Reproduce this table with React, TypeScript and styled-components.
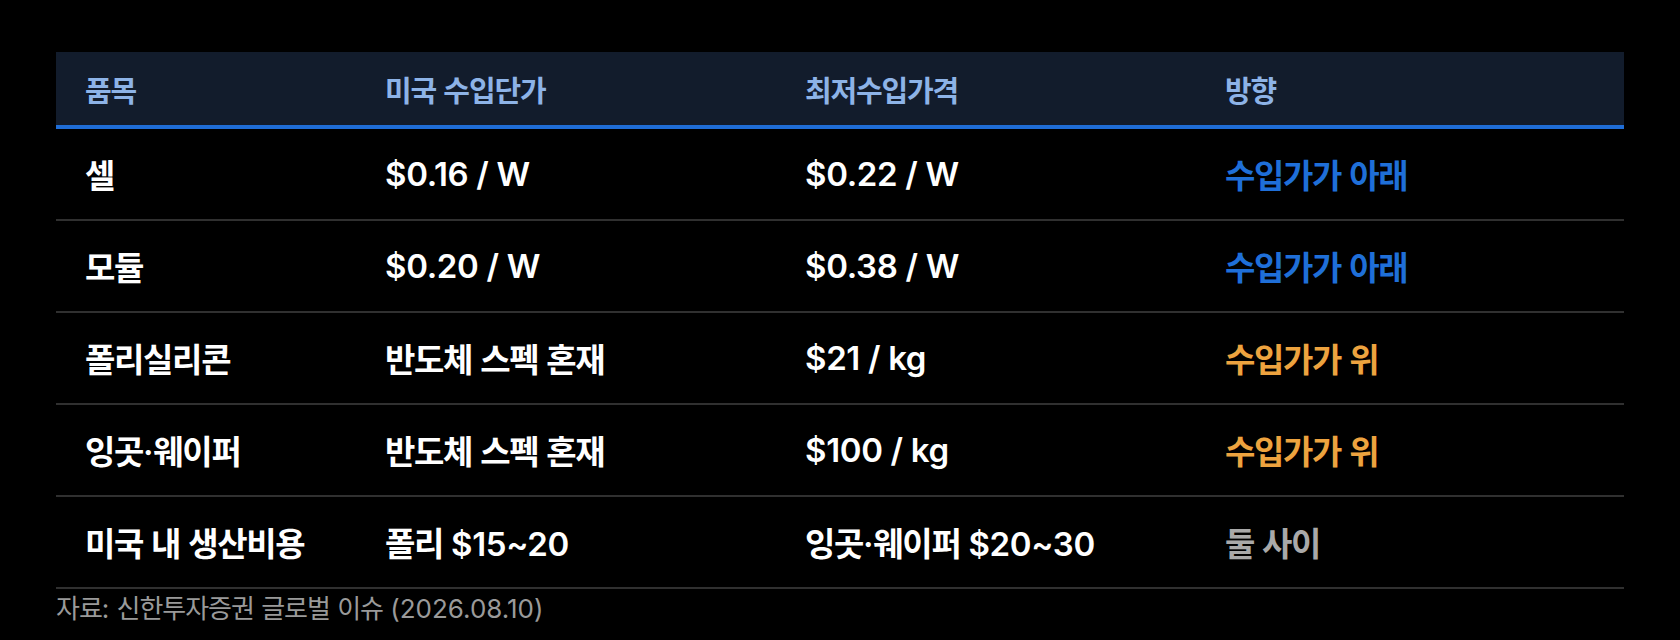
import React from "react";
import styled, { createGlobalStyle } from "styled-components";

type Tone = "plain" | "below" | "above" | "between";

interface RowData {
    item: string;
    usPrice: string;
    minPrice: string;
    direction: string;
    tone: Tone;
}

const ROWS: RowData[] = [
    { item: "셀", usPrice: "$0.16 / W", minPrice: "$0.22 / W", direction: "수입가가 아래", tone: "below" },
    { item: "모듈", usPrice: "$0.20 / W", minPrice: "$0.38 / W", direction: "수입가가 아래", tone: "below" },
    { item: "폴리실리콘", usPrice: "반도체 스펙 혼재", minPrice: "$21 / kg", direction: "수입가가 위", tone: "above" },
    { item: "잉곳·웨이퍼", usPrice: "반도체 스펙 혼재", minPrice: "$100 / kg", direction: "수입가가 위", tone: "above" },
    { item: "미국 내 생산비용", usPrice: "폴리 $15~20", minPrice: "잉곳·웨이퍼 $20~30", direction: "둘 사이", tone: "between" },
];

const TONES: Record<Tone, string> = {
    plain: "#ffffff",
    below: "#1f6fd8",
    above: "#eda33f",
    between: "#a9a9a9",
};

// hangul runs get tighter tracking so they sit closer to the latin glyphs
const HANGUL = /([\u3131-\u318e\uac00-\ud7a3]+)/;

const withHangul = (text: string) =>
    text.split(HANGUL).map((part, i) =>
        HANGUL.test(part) ? <Hangul key={i}>{part}</Hangul> : part
    );

const App: React.FC = () => {
    return (
        <>
            <GlobalStyle />
            <Page>
                <HeadRow>
                    <HeadCell>{withHangul("품목")}</HeadCell>
                    <HeadCell>{withHangul("미국 수입단가")}</HeadCell>
                    <HeadCell>{withHangul("최저수입가격")}</HeadCell>
                    <HeadCell>{withHangul("방향")}</HeadCell>
                </HeadRow>
                {ROWS.map((row) => (
                    <BodyRow key={row.item}>
                        <Cell tone="plain">{withHangul(row.item)}</Cell>
                        <Cell tone="plain">{withHangul(row.usPrice)}</Cell>
                        <Cell tone="plain">{withHangul(row.minPrice)}</Cell>
                        <Cell tone={row.tone}>{withHangul(row.direction)}</Cell>
                    </BodyRow>
                ))}
                <Source>{withHangul("자료: 신한투자증권 글로벌 이슈 (2026.08.10)")}</Source>
            </Page>
        </>
    );
};

const GlobalStyle = createGlobalStyle`
    html, body {
        margin: 0;
        background: #000000;
    }

    body {
        font-family: Inter, "Noto Sans CJK KR", "Noto Sans", sans-serif;
        color: #ffffff;
    }
`;

const Page = styled.main`
    padding: 52px 56px 0;
`;

const Hangul = styled.span`
    letter-spacing: -0.04em;
`;

const columns = "300px 420px 420px 1fr";

const HeadRow = styled.div`
    display: grid;
    grid-template-columns: ${columns};
    align-items: center;
    height: 73px;
    background-color: #121c2c;
    border-bottom: 4px solid #1f6dd6;
`;

const HeadCell = styled.div`
    padding-left: 29px;
    font-size: 29px;
    font-weight: 600;
    color: #8db3e7;
`;

const BodyRow = styled.div`
    display: grid;
    grid-template-columns: ${columns};
    align-items: center;
    height: 90px;
    border-bottom: 2px solid #303030;
`;

const Cell = styled.div<{ tone: Tone }>`
    padding-left: 29px;
    font-size: 33px;
    font-weight: 600;
    letter-spacing: -0.01em;
    color: ${({ tone }) => TONES[tone]};
    white-space: nowrap;
`;

const Source = styled.p`
    margin: 2px 0 0;
    font-size: 26px;
    line-height: 36px;
    color: #9a9a9a;
`;

export default App;
